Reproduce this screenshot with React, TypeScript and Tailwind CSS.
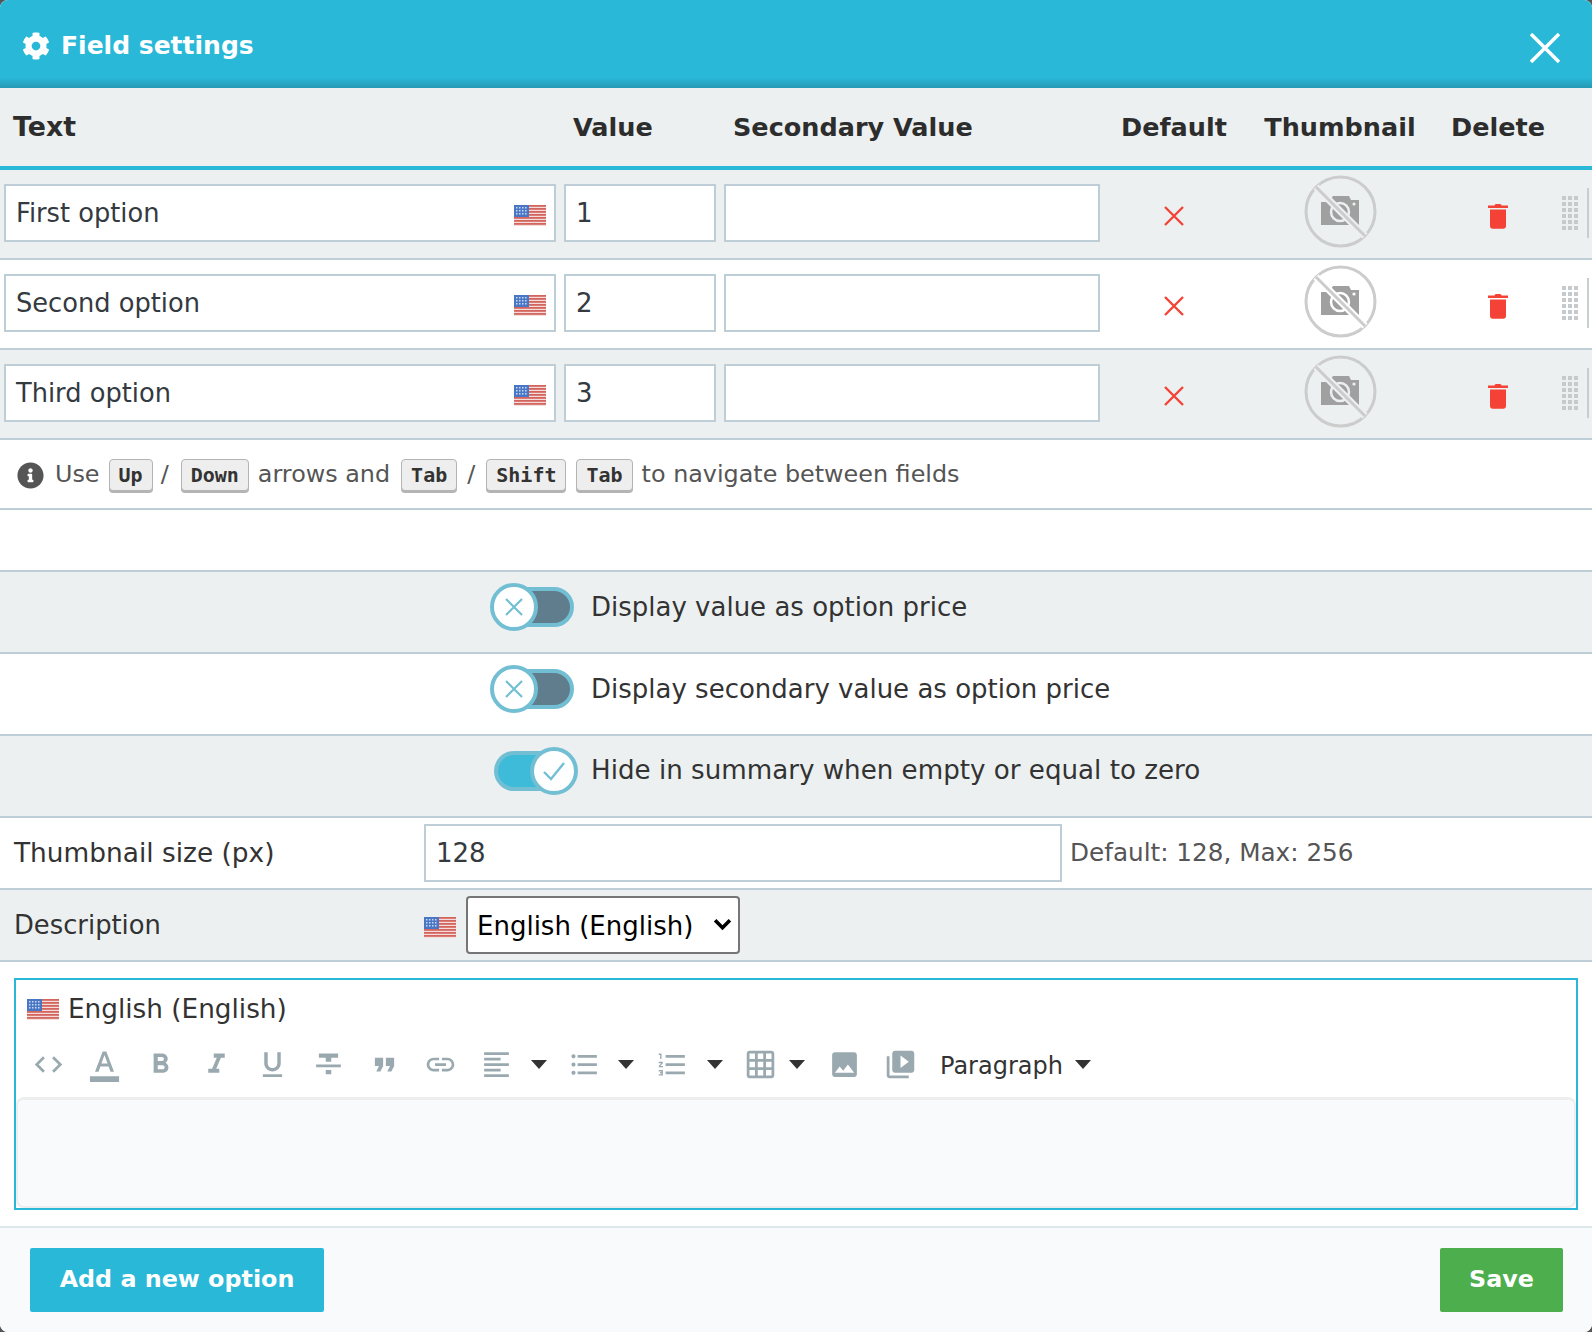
import React from "react";
import { FaCog, FaInfoCircle } from "react-icons/fa";
import {
  MdCode, MdFormatColorText, MdFormatBold, MdFormatItalic, MdFormatUnderlined, MdFormatStrikethrough,
  MdFormatQuote, MdInsertLink, MdFormatAlignLeft, MdFormatListBulleted, MdFormatListNumbered, MdGridOn,
  MdImage, MdVideoLibrary,
} from "react-icons/md";

function Flag({ className = "" }: { className?: string }) {
  return (
    <svg width="32" height="21" viewBox="0 0 32 21" className={"shrink-0 blur-[0.7px] " + className}>
      <rect width="32" height="21" fill="#f4dcda" />
      {[0, 3, 6, 9, 12, 15, 18].map((y) => (
        <rect key={y} x="0" y={y} width="32" height="1.8" fill="#d4655e" />
      ))}
      <rect width="15" height="12" fill="#4a76c6" />
      {[2, 5, 8].map((y) => [2, 5, 8, 11].map((x) => <rect key={x + "-" + y} x={x} y={y} width="1.5" height="1.5" fill="#c9d9f2" />))}
    </svg>
  );
}

function NoPhoto({ bg }: { bg: string }) {
  return (
    <svg width="73" height="73" viewBox="0 0 73 73" className="mb-[4px] shrink-0 blur-[0.3px]">
      <circle cx="36.5" cy="36.5" r="34.5" fill="none" stroke="#cccccc" strokeWidth="3" />
      <path d="M17 27h8l4-6h16l2 4h8v25H17z" fill="#a0a0a0" />
      <circle cx="36" cy="37" r="9" fill="none" stroke={bg} strokeWidth="2.5" />
      <circle cx="50" cy="29" r="1.6" fill={bg} />
      <path d="M12 12 61 61" stroke={bg} strokeWidth="7" />
      <path d="M12 12 61 61" stroke="#cccccc" strokeWidth="3" />
    </svg>
  );
}

function Grip() {
  const rows = [0, 6, 12, 18, 24, 30];
  return (
    <svg width="16" height="34" viewBox="0 0 16 34" className="shrink-0">
      {rows.map((y) => [0, 6, 12].map((x) => <rect key={x + "-" + y} x={x} y={y} width="4" height="4" fill="#c6cacc" />))}
    </svg>
  );
}

function RedX() {
  return (
    <svg width="20" height="20" viewBox="0 0 20 20" className="shrink-0">
      <path d="M1 1 19 19M19 1 1 19" stroke="#f44336" strokeWidth="2.4" />
    </svg>
  );
}

function Trash() {
  return (
    <svg width="20" height="26" viewBox="0 0 20 26" className="shrink-0">
      <path d="M6.5 2.5c0-1 1-1.5 2-1.5h3c1 0 2 .5 2 1.5H20V5H0V2.5z" fill="#f44336" />
      <path d="M2 6.500h16V23c0 1.700-1.200 2.700-2.700 2.700H4.700C3.200 25.700 2 24.700 2 23z" fill="#f44336" />
    </svg>
  );
}

const rows = [
  { label: "First option", value: "1", bg: "bg-[#ecf0f1]", hex: "#ecf0f1" },
  { label: "Second option", value: "2", bg: "bg-white", hex: "#ffffff" },
  { label: "Third option", value: "3", bg: "bg-[#ecf0f1]", hex: "#ecf0f1" },
];

function Kbd({ children }: { children: React.ReactNode }) {
  return (
    <span className="inline-flex h-[32px] items-center rounded-[4px] border border-[#b4b4b4] bg-[#eeeeee] px-[9px] font-['DejaVu_Sans_Mono',monospace] text-[20px] font-bold text-[#333333] shadow-[0_2px_0_#b4b4b4]">
      {children}
    </span>
  );
}

function Toggle({ on }: { on: boolean }) {
  if (on) {
    return (
      <div className="ml-[4px] flex h-[48px] w-[80px] items-center">
        <div className="h-[40px] w-[60px] shrink-0 rounded-l-full border-4 border-[#72bfd4] bg-[#3fbbda]" />
        <div className="z-10 -ml-[24px] flex h-[48px] w-[48px] shrink-0 items-center justify-center rounded-full border-4 border-[#72bfd4] bg-white">
          <svg width="24" height="20" viewBox="0 0 24 20"><path d="M2 11l7 7L22 2" fill="none" stroke="#72bfd4" strokeWidth="2.4" /></svg>
        </div>
      </div>
    );
  }
  return (
    <div className="flex h-[48px] w-[84px] items-center">
      <div className="z-10 flex h-[48px] w-[48px] shrink-0 items-center justify-center rounded-full border-4 border-[#72bfd4] bg-white">
        <svg width="20" height="20" viewBox="0 0 20 20"><path d="M2 2l16 16M18 2L2 18" fill="none" stroke="#72bfd4" strokeWidth="2.2" /></svg>
      </div>
      <div className="-ml-[12px] h-[40px] w-[48px] shrink-0 rounded-r-full border-4 border-[#72bfd4] bg-[#5f7d8c]" />
    </div>
  );
}

function ToggleRow({ on, label, bg }: { on: boolean; label: string; bg: string }) {
  return (
    <div className={"flex h-[82px] items-center gap-[17px] border-b-2 border-[#bdced6] pb-[10px] pl-[490px] " + bg}>
      <Toggle on={on} />
      <span className={on ? "text-[26.15px]" : ""}>{label}</span>
    </div>
  );
}

function Caret({ className = "" }: { className?: string }) {
  return (
    <svg width="16" height="10" viewBox="0 0 16 10" className={"shrink-0 " + className}>
      <path d="M0 1h16L8 10z" fill="#333333" />
    </svg>
  );
}

function Tool({ icon: Icon, w = "w-[56px]", size = 33 }: { icon: React.ComponentType<{ size?: number }>; w?: string; size?: number }) {
  return (
    <span className={"flex shrink-0 items-center justify-center text-[#9aa9af] " + w}>
      <Icon size={size} />
    </span>
  );
}

const inputCls = "flex h-[58px] items-center border-2 border-[#bdced6] bg-white px-[10px] text-[#333a40]";
const cols = "grid-cols-[560px_160px_384px_140px_192px_124px_32px]";

export default function App() {
  return (
    <div className="h-[1332px] w-[1592px] bg-[#555555] font-['DejaVu_Sans',sans-serif] text-[26px] text-[#333333]">
      <div className="flex h-full w-full flex-col overflow-hidden rounded-[8px] bg-white">
        {/* title bar */}
        <div className="flex h-[88px] shrink-0 items-center justify-between bg-[linear-gradient(to_bottom,#29b8d8_0,#29b8d8_88%,#2699b3_100%)] pl-[22px] pr-[32px] text-white">
          <div className="flex items-center gap-[11px] pt-[3px] text-[25px] font-bold">
            <FaCog size={28} />
            <span>Field settings</span>
          </div>
          <svg width="30" height="30" viewBox="0 0 30 30" className="mt-[8px]">
            <path d="M1 1l28 28M29 1L1 29" stroke="#ffffff" strokeWidth="3.5" />
          </svg>
        </div>

        {/* table head */}
        <div className={"grid h-[82px] shrink-0 items-center border-b-4 border-[#29b8d8] bg-[#ecf0f1] text-[25.5px] font-bold text-[#2d2d2d] " + cols}>
          <div className="pl-[13px] text-[26.8px]">Text</div>
          <div className="pl-[13px]">Value</div>
          <div className="pl-[13px]">Secondary Value</div>
          <div className="text-center">Default</div>
          <div className="text-center">Thumbnail</div>
          <div className="text-center">Delete</div>
          <div />
        </div>

        {/* option rows */}
        {rows.map((r) => (
          <div key={r.label} className={"grid h-[90px] shrink-0 items-center border-b-2 border-[#bdced6] pb-[2px] " + cols + " " + r.bg}>
            <div className="pl-[4px] pr-[4px]">
              <div className={inputCls + " pr-[8px] text-[25.7px]"}>
                <span className="flex-1">{r.label}</span>
                <Flag className="mt-[4px]" />
              </div>
            </div>
            <div className="pl-[4px] pr-[4px]">
              <div className={inputCls}>{r.value}</div>
            </div>
            <div className="pl-[4px] pr-[4px]">
              <div className={inputCls} />
            </div>
            <div className="flex justify-center pt-[6px]"><RedX /></div>
            <div className="flex justify-center"><NoPhoto bg={r.hex} /></div>
            <div className="flex justify-center pt-[6px]"><Trash /></div>
            <div className="flex items-center gap-[9px] pl-[2px]">
              <Grip />
              <span className="h-[50px] w-[2px] shrink-0 bg-[#c8cdd0]" />
            </div>
          </div>
        ))}

        {/* hint */}
        <div className="flex h-[70px] shrink-0 items-center border-b-2 border-[#bdced6] pl-[17px] pt-[2px] text-[23.85px] text-[#555555]">
          <FaInfoCircle size={27} className="mr-[11px] mt-[1px] text-[#555555]" />
          <span>Use</span>
          <span className="ml-[9px]"><Kbd>Up</Kbd></span>
          <span className="ml-[8px]">/</span>
          <span className="ml-[12px]"><Kbd>Down</Kbd></span>
          <span className="ml-[9px]">arrows and</span>
          <span className="ml-[11px]"><Kbd>Tab</Kbd></span>
          <span className="ml-[10px]">/</span>
          <span className="ml-[11px]"><Kbd>Shift</Kbd></span>
          <span className="ml-[10px]"><Kbd>Tab</Kbd></span>
          <span className="ml-[9px]">to navigate between fields</span>
        </div>

        <div className="h-[62px] shrink-0 border-b-2 border-[#bdced6]" />

        <ToggleRow on={false} label="Display value as option price" bg="bg-[#ecf0f1]" />
        <ToggleRow on={false} label="Display secondary value as option price" bg="bg-white" />
        <ToggleRow on={true} label="Hide in summary when empty or equal to zero" bg="bg-[#ecf0f1]" />

        {/* thumbnail size */}
        <div className="flex h-[72px] shrink-0 items-center border-b-2 border-[#bdced6] pl-[14px]">
          <span className="w-[410px] text-[26.4px]">Thumbnail size (px)</span>
          <div className={inputCls + " w-[638px]"}>128</div>
          <span className="ml-[8px] text-[24.7px] text-[#555555]">Default: 128, Max: 256</span>
        </div>

        {/* description */}
        <div className="flex h-[72px] shrink-0 items-center border-b-2 border-[#bdced6] bg-[#ecf0f1] pl-[14px]">
          <span className="w-[410px] text-[25.8px]">Description</span>
          <Flag className="mt-[4px]" />
          <div className="relative ml-[10px]">
            <select className="h-[58px] w-[274px] appearance-none rounded-[4px] border-2 border-[#767676] bg-white pl-[9px] pt-[3px] text-black">
              <option>English (English)</option>
            </select>
            <svg width="19" height="13" viewBox="0 0 18 12" className="pointer-events-none absolute right-[8px] top-[22px]">
              <path d="M2 2l7 7 7-7" fill="none" stroke="#000000" strokeWidth="3.4" />
            </svg>
          </div>
        </div>

        {/* editor */}
        <div className="shrink-0 px-[14px] pb-[16px] pt-[16px]">
          <div className="flex h-[232px] flex-col border-2 border-[#29b8d8]">
            <div className="flex items-center gap-[9px] pl-[11px] pt-[10px]">
              <Flag />
              <span className="text-[26.3px]">English (English)</span>
            </div>
            <div className="flex h-[68px] items-center pl-[4px] pt-[2px]">
              <Tool icon={MdCode} />
              <Tool icon={MdFormatColorText} size={35} />
              <Tool icon={MdFormatBold} />
              <Tool icon={MdFormatItalic} />
              <Tool icon={MdFormatUnderlined} />
              <Tool icon={MdFormatStrikethrough} />
              <Tool icon={MdFormatQuote} />
              <Tool icon={MdInsertLink} />
              <Tool icon={MdFormatAlignLeft} />
              <Caret className="ml-[7px]" />
              <Tool icon={MdFormatListBulleted} w="w-[75px]" />
              <Caret className="-ml-[4px]" />
              <Tool icon={MdFormatListNumbered} w="w-[76px]" />
              <Caret className="-ml-[3px]" />
              <Tool icon={MdGridOn} w="w-[74px]" />
              <Caret className="-ml-[8px]" />
              <Tool icon={MdImage} w="w-[79px]" />
              <Tool icon={MdVideoLibrary} w="w-[33px]" />
              <span className="ml-[23px] mt-[4px] text-[24px]">Paragraph</span>
              <Caret className="ml-[12px]" />
            </div>
            <div className="flex-1 rounded-[8px] border-2 border-t-[3px] border-[#eeeeee] bg-[#f9fafc]" />
          </div>
        </div>

        {/* footer */}
        <div className="flex flex-1 items-center justify-between border-t-2 border-[#dde8ec] bg-[#f9fafc] pl-[30px] pr-[29px] text-[23.8px] font-bold text-white">
          <button className="h-[64px] w-[294px] rounded-[2px] bg-[#29b8d8]">Add a new option</button>
          <button className="h-[64px] w-[123px] rounded-[2px] bg-[#4cae4c]">Save</button>
        </div>
      </div>
    </div>
  );
}
